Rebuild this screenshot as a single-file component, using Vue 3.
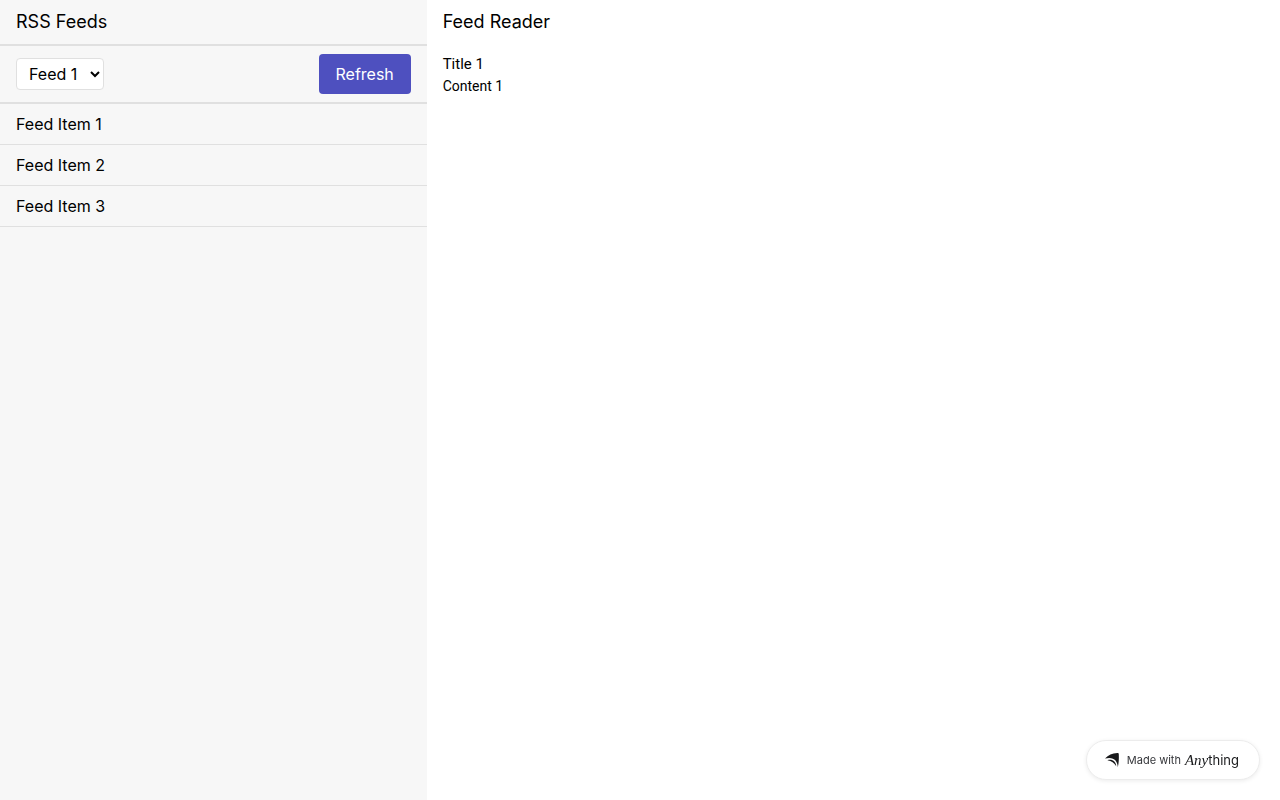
<script setup>
import { ref } from 'vue'

const feeds = ['Feed 1', 'Feed 2', 'Feed 3']
const selected = ref('Feed 1')
const items = ['Feed Item 1', 'Feed Item 2', 'Feed Item 3']
const article = { title: 'Title 1', content: 'Content 1' }
</script>

<template>
  <div class="layout">
    <aside class="sidebar">
      <header class="head"><h1 class="heading">RSS Feeds</h1></header>
      <div class="toolbar">
        <select v-model="selected" class="picker" aria-label="Feed">
          <option v-for="f in feeds" :key="f">{{ f }}</option>
        </select>
        <button class="refresh" type="button">Refresh</button>
      </div>
      <ul class="items">
        <li v-for="i in items" :key="i" class="item">{{ i }}</li>
      </ul>
    </aside>
    <main class="reader">
      <h2 class="heading">Feed Reader</h2>
      <article class="article">
        <h3 class="title">{{ article.title }}</h3>
        <p class="content">{{ article.content }}</p>
      </article>
    </main>
    <a class="badge" href="#">
      <svg class="mark" viewBox="0 0 14 16" aria-hidden="true">
        <path d="M0 6.6C3.4 3 7 1.2 12.4 1C13.4 1 13.8 1.4 13.8 2.4C14 7 13.8 11 12.8 15.2C12.6 8.6 8.4 4.4 0 6.6Z" fill="#18191b" />
        <path d="M2.4 8.2C7.4 6.8 11 9.6 11.2 14.2C9.2 11 6.6 9 2.4 8.2Z" fill="#18191b" />
      </svg>
      <span class="made">Made with</span>
      <span class="brand"><i class="any">Any</i>thing</span>
    </a>
  </div>
</template>

<style>
body {
  margin: 0;
  background: #fff;
}
</style>

<style scoped>
.layout {
  display: grid;
  grid-template-columns: 1fr 2fr;
  min-height: 100vh;
  font: 400 16px/24px Inter, sans-serif;
  color: #000;
}
.sidebar {
  background: #f7f7f7;
}
.head {
  padding: 8px 16px;
  border-bottom: 2px solid #e0e0e0;
}
.heading {
  margin: 0;
  font-size: 18px;
  line-height: 28px;
  font-weight: 400;
}
.toolbar {
  display: flex;
  justify-content: space-between;
  align-items: center;
  padding: 8px 16px;
  border-bottom: 2px solid #e0e0e0;
}
.picker {
  width: 88px;
  height: 32px;
  padding: 0 0 0 8px;
  border: 1px solid #e0e0e0;
  border-radius: 4px;
  background: #fff;
  color: #000;
  font: inherit;
}
.refresh {
  min-width: 92px;
  padding: 8px 16px;
  border: 0;
  border-radius: 4px;
  background: #4e50bf;
  color: #fff;
  font: inherit;
}
.items {
  margin: 0;
  padding: 0;
  list-style: none;
}
.item {
  padding: 8px 16px;
  border-bottom: 1px solid #e0e0e0;
}
.reader {
  padding: 8px 16px;
}
.article {
  padding-top: 16px;
  font-family: Roboto, sans-serif;
}
.title {
  margin: 0;
  font-size: 15px;
  line-height: 24px;
  font-weight: 400;
}
.content {
  margin: 0;
  font-size: 14px;
  line-height: 20px;
}
.badge {
  position: fixed;
  right: 20px;
  bottom: 20px;
  box-sizing: border-box;
  height: 40px;
  padding: 0 20px 0 18px;
  display: flex;
  align-items: center;
  border: 1px solid #ececec;
  border-radius: 20px;
  background: #fff;
  box-shadow: 0 1px 4px rgba(0, 0, 0, 0.08);
  color: #18191b;
  text-decoration: none;
  white-space: nowrap;
}
.mark {
  width: 14px;
  height: 16px;
  margin-right: 8px;
}
.made {
  margin-right: 4px;
  font-size: 11px;
  line-height: 16px;
  color: #35363a;
}
.brand {
  font: 400 13px/20px Inter, sans-serif;
}
.any {
  font-family: "Liberation Serif", serif;
  font-size: 15px;
}
</style>
